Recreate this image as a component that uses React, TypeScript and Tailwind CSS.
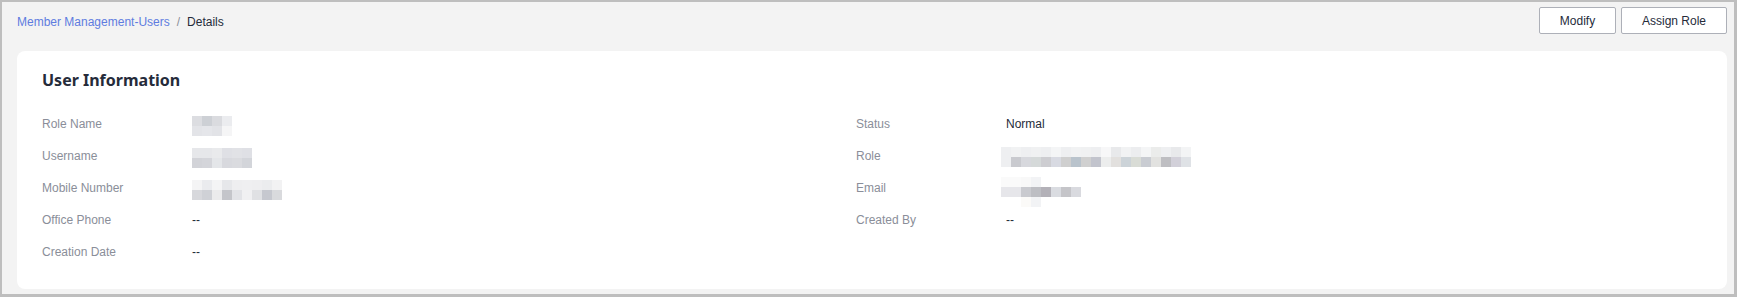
import React from "react";

type Blur = { rows: (string | null)[][]; offset?: boolean };

const roleName: (string | null)[][] = [
  ["#dcdde1", "#cdd0d5", "#dadbdf", "#ebecef"],
  ["#e3e4e8", "#e5e6ea", "#e2e3e7", "#f5f5f6"],
];
const username: (string | null)[][] = [
  ["#e6e7ea", "#e6e7ea", "#e9eaec", "#dfe0e5", "#e1e2e6", "#dfe0e5"],
  ["#d2d3d8", "#d4d5da", "#e4e6e9", "#d8d9de", "#dadbdf", "#d3d5da"],
];
const mobile: (string | null)[][] = [
  ["#f4f4f5", "#eaebee", "#f4f4f5", "#e6e7ea", "#eeeef0", "#efeff1", "#eeeef0", "#ebecee", "#f2f2f3"],
  ["#d7d8dc", "#cfd1d6", "#ebebec", "#c4c5ca", "#e2e3e7", "#f0f0f2", "#e0e1e4", "#c6c8cf", "#d9dadd"],
];
const role: (string | null)[][] = [
  ["#eeeff1", "#f1f2f3", "#eeeff1", "#f0f1f2", "#eeeff1", "#f4f5f6", "#eeeff1", "#f1f2f3", "#f0f1f2", "#eeeff1", "#f7f7f8", "#e8e9eb", "#f1f2f3", "#ecedef", "#f4f5f6", "#ebeceb", "#eeeff1", "#e8e9eb", "#f3f4f5"],
  ["#eeeff1", "#c9cacf", "#d7d8dd", "#d5d9d9", "#cdcdd1", "#d8dae2", "#cfcfcf", "#b9c3cc", "#d0d0d0", "#c2c4cd", "#eceded", "#e2e0de", "#ccd3d8", "#d9dcd6", "#c9ccd2", "#e2e2e0", "#bebec2", "#d2d0d9", "#dfe2e6"],
];
const email: (string | null)[][] = [
  ["#fafafa", "#fafafa", "#f8f8f8", "#f2f3f5", null, null, null, null],
  ["#e6e6ea", "#e6e6ea", "#c9cacf", "#bdbec3", "#b3b1b8", "#dadce1", "#c5c5c9", "#d9dadf"],
  [null, null, "#fbfaf8", "#f2f3f5", null, null, null, null],
];

function BlurBlock({ rows, offset }: Blur) {
  return (
    <div className={offset ? "flex flex-col -ml-[5px]" : "flex flex-col"}>
      {rows.map((r, i) => (
        <div key={i} className="flex">
          {r.map((c, j) => (
            <div key={j} className="w-[10px] h-[10px]" style={{ backgroundColor: c ?? "transparent" }} />
          ))}
        </div>
      ))}
    </div>
  );
}

function Row({ label, children, extra }: { label: string; children: React.ReactNode; extra?: string }) {
  return (
    <div className="flex items-center h-[32px]">
      <div className="w-[150px] text-[12px] text-[#8a8e99] shrink-0">{label}</div>
      <div className={"text-[12px] text-[#252b3a] " + (extra ?? "")}>{children}</div>
    </div>
  );
}

export default function App() {
  return (
    <div
      className="h-[297px] w-full border-t-2 border-l-2 border-r-[3px] border-b-[3px] border-[#bebebe] bg-[#f3f3f3] pl-[15px] pr-[7px] pt-[5px] overflow-hidden"
      style={{ fontFamily: '"Liberation Sans", Arial, sans-serif' }}
    >
      <div className="flex items-center justify-between h-[27px]">
        <div className="flex items-center text-[12px] mt-[3px]">
          <span className="text-[#5e7ce0]">Member Management-Users</span>
          <span className="px-[7px] text-[#8a8e99]">/</span>
          <span className="text-[#252b3a]">Details</span>
        </div>
        <div className="flex items-center gap-[5px]">
          <button className="w-[77px] h-[27px] border border-[#adb0b8] rounded-[2px] bg-white text-[12px] text-[#252b3a]">
            Modify
          </button>
          <button className="w-[106px] h-[27px] border border-[#adb0b8] rounded-[2px] bg-white text-[12px] text-[#252b3a]">
            Assign Role
          </button>
        </div>
      </div>

      <div className="mt-[17px] bg-white rounded-[8px] h-[238px] pl-[25px] pt-[17px]">
        <div
          className="h-[24px] leading-[24px] text-[16px] font-bold text-[#252b3a]"
          style={{ fontFamily: '"Noto Sans", "Open Sans", sans-serif' }}
        >
          User Information
        </div>
        <div className="flex mt-[16px]">
          <div className="w-[814px] flex flex-col">
            <Row label="Role Name" extra="mt-[4px]">
              <BlurBlock rows={roleName} />
            </Row>
            <Row label="Username" extra="mt-[4px]">
              <BlurBlock rows={username} />
            </Row>
            <Row label="Mobile Number" extra="mt-[4px]">
              <BlurBlock rows={mobile} />
            </Row>
            <Row label="Office Phone">--</Row>
            <Row label="Creation Date">--</Row>
          </div>
          <div className="flex flex-col">
            <Row label="Status">Normal</Row>
            <Row label="Role" extra="mt-[1px]">
              <BlurBlock rows={role} offset />
            </Row>
            <Row label="Email" extra="mt-[8px]">
              <BlurBlock rows={email} offset />
            </Row>
            <Row label="Created By">--</Row>
          </div>
        </div>
      </div>
    </div>
  );
}
